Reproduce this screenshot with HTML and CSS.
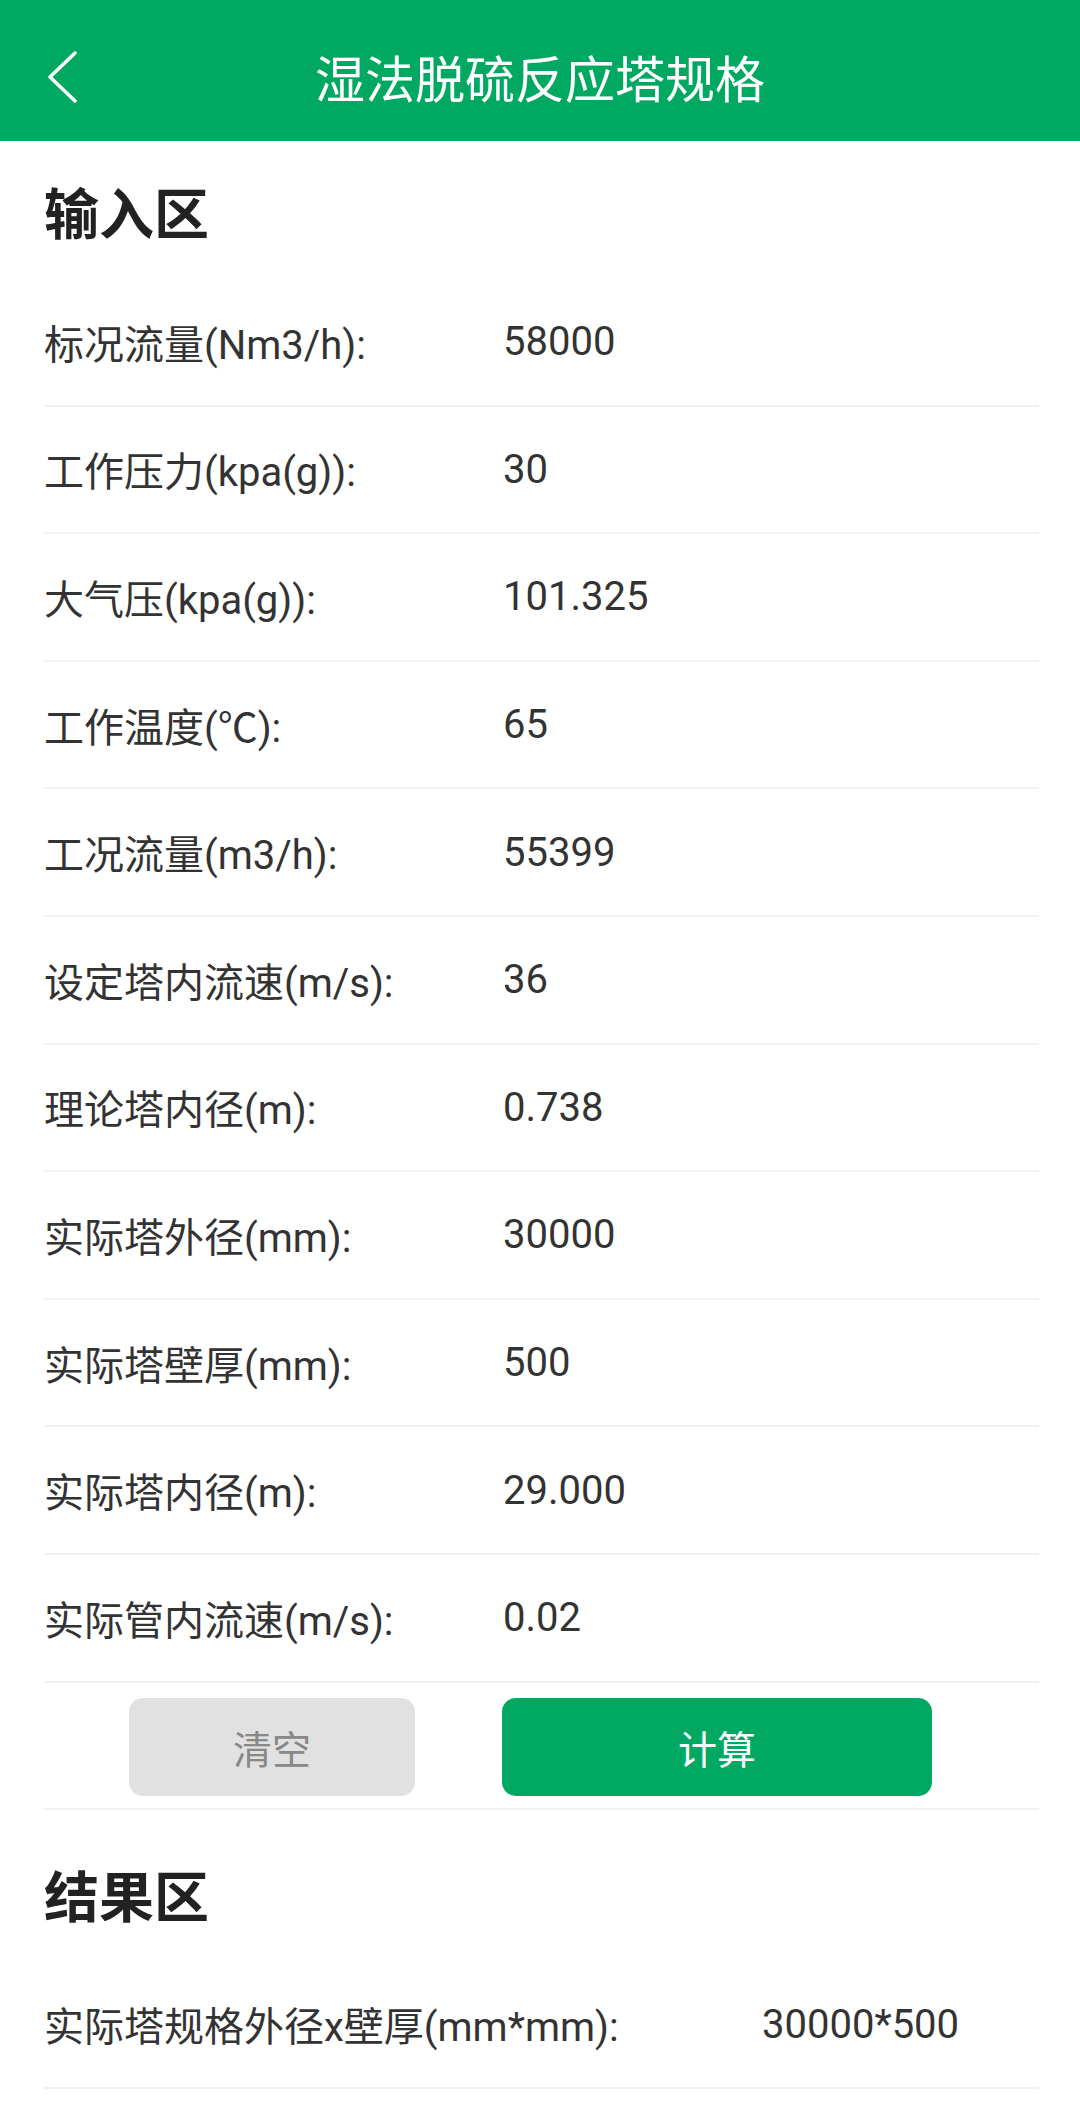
FILE: index.html
```html
<!DOCTYPE html>
<html lang="zh-CN">
<head>
    <meta charset="UTF-8">
    <meta name="viewport" content="width=device-width, initial-scale=1.0">
    <title>湿法脱硫反应塔规格</title>
    <link rel="stylesheet" href="styles.css">
</head>
<body>
    <div class="topbar">
        <span class="back-btn">
            <svg width="32" height="52" viewBox="0 0 32 52">
                <polyline points="29,2 4,26 29,50" fill="none" stroke="#ffffff" stroke-width="3.5" stroke-linecap="round" stroke-linejoin="round"/>
            </svg>
        </span>
        <h1 class="topbar-title">湿法脱硫反应塔规格</h1>
    </div>

    <div class="content">
        <h2 class="section-title">输入区</h2>
        <div class="form-row"><span class="label">标况流量(Nm3/h):</span><span class="value">58000</span></div>
        <div class="form-row"><span class="label">工作压力(kpa(g)):</span><span class="value">30</span></div>
        <div class="form-row"><span class="label">大气压(kpa(g)):</span><span class="value">101.325</span></div>
        <div class="form-row"><span class="label">工作温度(℃):</span><span class="value">65</span></div>
        <div class="form-row"><span class="label">工况流量(m3/h):</span><span class="value">55399</span></div>
        <div class="form-row"><span class="label">设定塔内流速(m/s):</span><span class="value">36</span></div>
        <div class="form-row"><span class="label">理论塔内径(m):</span><span class="value">0.738</span></div>
        <div class="form-row"><span class="label">实际塔外径(mm):</span><span class="value">30000</span></div>
        <div class="form-row"><span class="label">实际塔壁厚(mm):</span><span class="value">500</span></div>
        <div class="form-row"><span class="label">实际塔内径(m):</span><span class="value">29.000</span></div>
        <div class="form-row"><span class="label">实际管内流速(m/s):</span><span class="value">0.02</span></div>

        <div class="btn-row">
            <button class="btn btn-clear">清空</button>
            <button class="btn btn-calc">计算</button>
        </div>

        <h2 class="section-title result-title">结果区</h2>
        <div class="form-row result-row"><span class="label">实际塔规格外径x壁厚(mm*mm):</span><span class="value">30000*500</span></div>
    </div>
    <div class="bottom-strip"></div>
</body>
</html>
```

FILE: styles.css
```css
body {
    margin: 0;
    font-family: Roboto, "Noto Sans CJK SC", sans-serif;
    background-color: #ffffff;
    color: #333333;
}
.topbar {
    height: 141px;
    background-color: #00a862;
    display: flex;
    align-items: center;
    padding-top: 12px;
    box-sizing: border-box;
    position: relative;
}
.back-btn {
    display: flex;
    margin-left: 46px;
}
.topbar-title {
    position: absolute;
    left: 0;
    right: 0;
    top: 10px;
    bottom: 0;
    margin: 0;
    display: flex;
    align-items: center;
    justify-content: center;
    font-size: 50px;
    font-weight: normal;
    color: #ffffff;
    pointer-events: none;
}
.content {
    padding: 0 41px 0 44px;
}
.section-title {
    margin: 0;
    height: 138px;
    padding-top: 0;
    box-sizing: border-box;
    display: flex;
    align-items: center;
    font-size: 55px;
    font-weight: bold;
    color: #222222;
}
.result-title {
    height: 152px;
    padding-top: 14px;
}
.form-row {
    height: 127.6px;
    box-sizing: border-box;
    border-bottom: 2px solid #f1f1f1;
    display: flex;
    align-items: center;
    font-size: 40px;
    color: #333333;
}
.label {
    width: 459px;
    flex-shrink: 0;
}
.result-row .label {
    width: 718px;
}
.btn-row {
    height: 127px;
    box-sizing: border-box;
    border-bottom: 2px solid #f1f1f1;
    display: flex;
    align-items: flex-start;
    padding: 15px 0 0 85px;
    gap: 87px;
}
.btn {
    height: 98px;
    border: none;
    border-radius: 14px;
    font-family: Roboto, "Noto Sans CJK SC", sans-serif;
    font-size: 39px;
    cursor: pointer;
}
.btn-clear {
    width: 286px;
    background-color: #e1e1e1;
    color: #888888;
}
.btn-calc {
    width: 430px;
    background-color: #00a862;
    color: #ffffff;
}
.bottom-strip {
    height: 32px;
}
```
